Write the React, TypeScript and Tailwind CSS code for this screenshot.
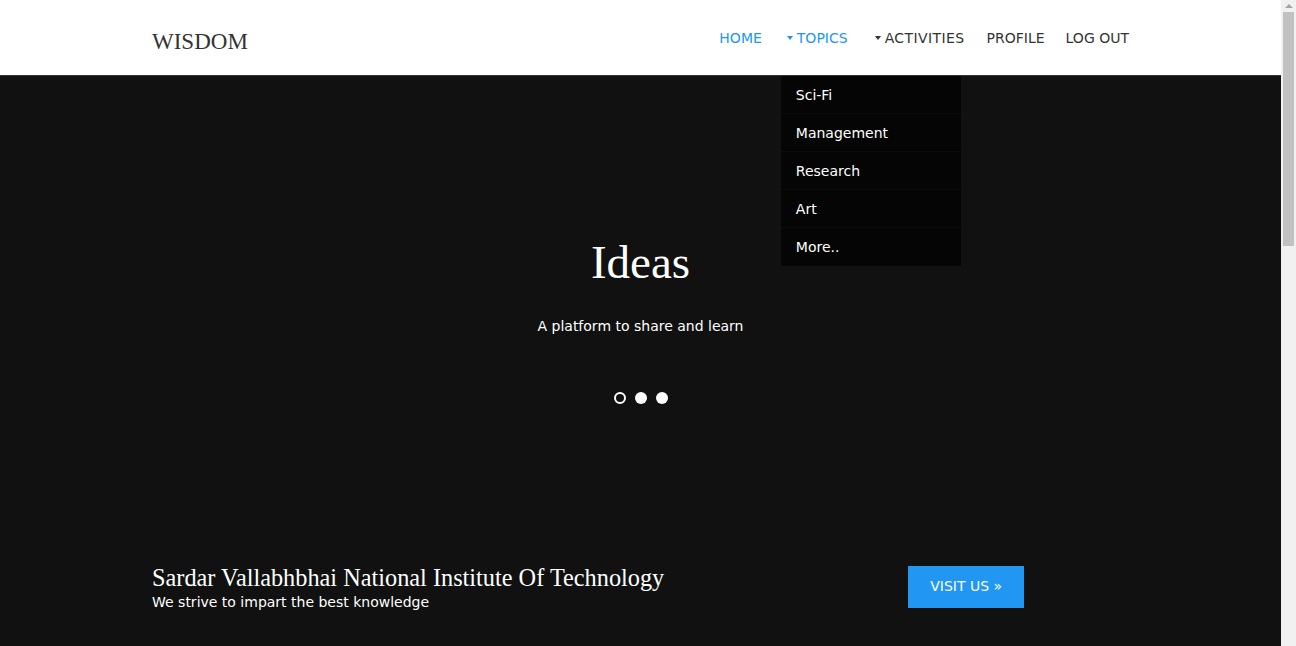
import React from "react";

const navLink = "text-[14px] leading-5 uppercase";
const sans = "font-['DejaVu_Sans',Verdana,sans-serif]";
const serif = "font-['Liberation_Serif',Georgia,serif]";

const Caret: React.FC = () => (
    <span className="inline-block w-0 h-0 border-l-[3.5px] border-r-[3.5px] border-t-[4px] border-l-transparent border-r-transparent border-t-current mr-[4px] mb-[3px]" />
);

const topics = ["Sci-Fi", "Management", "Research", "Art", "More.."];

const App: React.FC = () => {
    return (
        <div className={`${sans} flex h-[646px] overflow-hidden`}>
            <div className="flex-1 bg-[#111111]">
                <header className="h-[76px] bg-white border-b border-[#333333]">
                    <div className="w-[977px] mx-auto flex justify-between">
                        <a className={`${serif} text-[23px] leading-[26px] text-[#333333] pt-[29px]`}>WISDOM</a>
                        <ul className="flex items-start pt-[28px] text-[#333333]">
                            <li className={`${navLink} text-[#2196F3] mr-[25px]`}>Home</li>
                            <li className={`${navLink} text-[#2196F3] mr-[27px] relative`}>
                                <Caret />Topics
                                <div className="absolute left-[-6px] top-[48px] w-[180px] bg-[#050505] normal-case z-10">
                                    {topics.map((t, i) => (
                                        <div
                                            key={t}
                                            className={`h-[38px] px-[15px] flex items-center text-white text-[14px] ${i < topics.length - 1 ? "border-b border-[#0b0b0b]" : ""}`}
                                        >
                                            {t}
                                        </div>
                                    ))}
                                </div>
                            </li>
                            <li className={`${navLink} mr-[22px] tracking-[0.4px]`}>
                                <Caret />Activities
                            </li>
                            <li className={`${navLink} mr-[21px]`}>Profile</li>
                            <li className={navLink}>Log out</li>
                        </ul>
                    </div>
                </header>

                <section className="flex flex-col items-center pt-[158px] text-white">
                    <h1 className={`${serif} text-[47px] leading-[56px]`}>Ideas</h1>
                    <p className="text-[14px] leading-5 mt-[26px]">A platform to share and learn</p>
                    <div className="flex gap-[9px] mt-[56px]">
                        <span className="w-[12px] h-[12px] rounded-full border-2 border-white" />
                        <span className="w-[12px] h-[12px] rounded-full bg-white" />
                        <span className="w-[12px] h-[12px] rounded-full bg-white" />
                    </div>
                </section>

                <section className="w-[977px] mx-auto grid grid-cols-12 items-center mt-[158px] text-white">
                    <div className="col-span-8 pt-[2px]">
                        <h2 className={`${serif} text-[24.3px] leading-[28px]`}>Sardar Vallabhbhai National Institute Of Technology</h2>
                        <p className="text-[14px] leading-[18px] mt-px">We strive to impart the best knowledge</p>
                    </div>
                    <div className="col-span-4 flex justify-center">
                        <a className="w-[116px] h-[42px] bg-[#2196F3] flex items-center justify-center text-[14px] uppercase">
                            Visit us &raquo;
                        </a>
                    </div>
                </section>
            </div>

            {/* page scrollbar */}
            <div className="w-[15px] bg-[#f1f1f1] flex flex-col items-center">
                <span className="mt-[4px] w-0 h-0 border-l-[4px] border-r-[4px] border-b-[4px] border-l-transparent border-r-transparent border-b-[#a3a3a3]" />
                <div className="mt-[4px] w-[11px] h-[234px] bg-[#c1c1c1]" />
            </div>
        </div>
    );
};

export default App;
